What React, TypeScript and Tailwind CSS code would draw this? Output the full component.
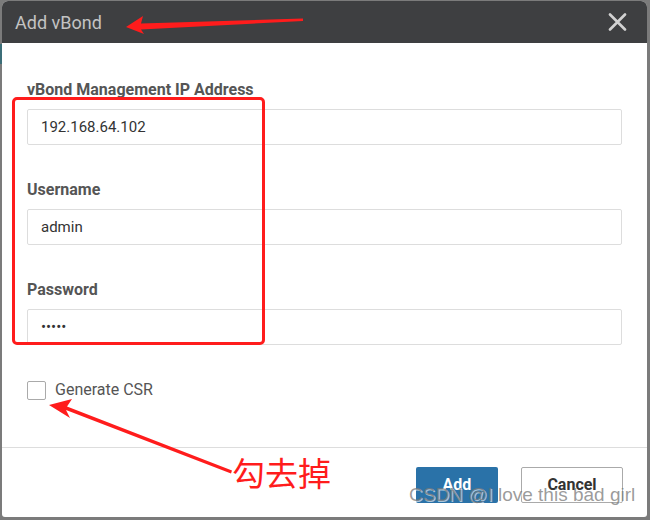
import React from "react";

function Field({ label, value, mt }: { label: string; value: string; mt: string }) {
  return (
    <div className={`flex flex-col ${mt}`}>
      <div className="h-[20px] text-[16px] leading-[20px] font-bold text-[#555555]">{label}</div>
      <div className="mt-[9px] h-[36px] w-[595px] rounded-[2px] border border-[#dddddd] bg-white flex items-center pl-[13px] text-[15px] text-[#333333]">
        {value}
      </div>
    </div>
  );
}

export default function App() {
  return (
    <div
      className="relative w-[650px] h-[520px] bg-[#7b7b7b] overflow-hidden"
      style={{ fontFamily: "Roboto, 'Noto Sans', sans-serif" }}
    >
      <div className="absolute left-0 top-[44px] w-[2px] h-[20px] bg-[#3c6e78]" />
      <div className="ml-[2px] mt-[1px] w-[645px] h-[516px] bg-white rounded-t-[6px] rounded-b-[3px] flex flex-col overflow-hidden">
        <div className="h-[42px] bg-[#3e3f41] flex items-center justify-between pl-[13px] pr-[20px]">
          <span className="text-[18px] text-[#c3c3c3] leading-none mt-[1px]">Add vBond</span>
          <svg width="19" height="18" viewBox="0 0 19 18">
            <path d="M2 1.5 L17 16.5 M17 1.5 L2 16.5" stroke="#d2d2d2" strokeWidth="2.6" strokeLinecap="round" />
          </svg>
        </div>
        <div className="flex flex-col pl-[25px] pt-[37px]">
          <Field label="vBond Management IP Address" value="192.168.64.102" mt="" />
          <Field label="Username" value="admin" mt="mt-[35px]" />
          <Field label="Password" value="•••••" mt="mt-[35px]" />
          <div className="mt-[33px] flex items-center gap-[9px]">
            <div className="w-[19px] h-[19px] border border-[#aaaaaa] rounded-[2px] bg-white" />
            <span className="text-[16px] text-[#555555]">Generate CSR</span>
          </div>
        </div>
        <div className="mt-[45px] border-t border-[#dddddd] flex justify-end gap-[23px] pt-[19px] pr-[24px]">
          <div className="w-[82px] h-[36px] bg-[#2a72a8] rounded-[2px] flex items-center justify-center text-white font-bold text-[16px]">
            Add
          </div>
          <div className="w-[102px] h-[36px] border border-[#aaaaaa] rounded-[2px] bg-white flex items-center justify-center text-[#333333] font-bold text-[16px]">
            Cancel
          </div>
        </div>
      </div>

      {/* annotations */}
      <div className="absolute left-[12px] top-[97px] w-[253px] h-[248px] border-[3px] border-[#ff1c1c] rounded-[5px]" />
      <svg className="absolute left-0 top-0" width="650" height="520" viewBox="0 0 650 520">
        <polygon points="126,27 143,16 141,23.5 303,18.5 303,21 141,29.5 144,34" fill="#ff1c1c" />
        <polygon points="49,405 72,399 67,406.5 232,470.5 231,473.5 66,410 70,418" fill="#ff1c1c" />
      </svg>
      <div
        className="absolute left-[232px] top-[452px] text-[33px] leading-[40px] text-[#ff1c1c]"
        style={{ fontFamily: "'Noto Sans CJK SC', sans-serif" }}
      >
        勾去掉
      </div>
      <div
        className="absolute left-[409px] top-[483px] text-[19px] leading-[24px] text-[#7a7a7a]/75"
        style={{ fontFamily: "'Liberation Sans', Arial, sans-serif", textShadow: "1px 1px 0 rgba(255,255,255,0.6)" }}
      >
        CSDN @I love this bad girl
      </div>
    </div>
  );
}
